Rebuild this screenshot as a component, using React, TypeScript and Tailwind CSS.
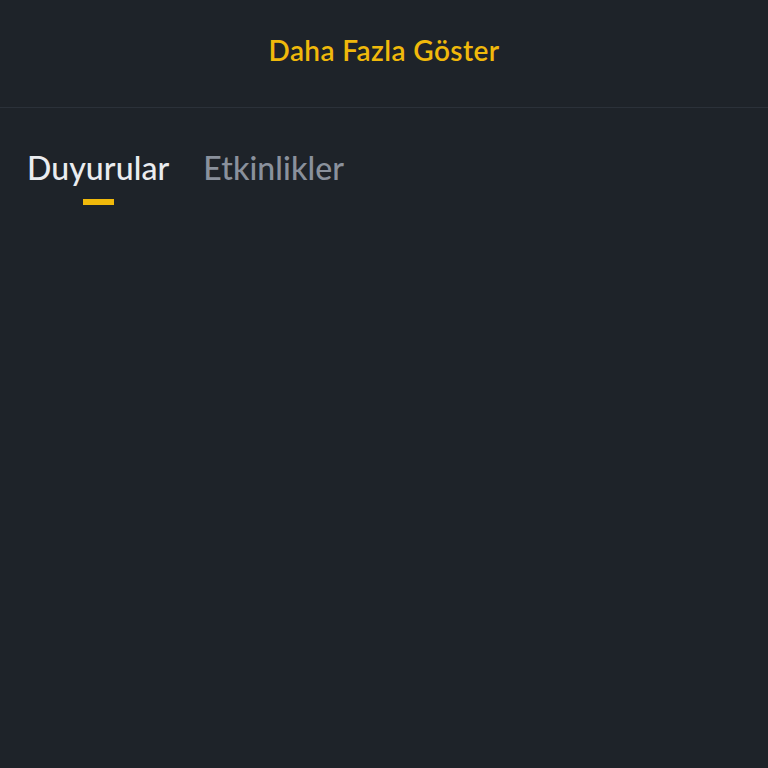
export default function App() {
  return (
    <div className="min-h-screen w-full bg-[#1e2329] font-['Lato','Liberation_Sans',sans-serif]">
      {/* --- Show more */}
      <div className="flex h-[108px] items-center justify-center border-b border-[#2b3139] pb-[8px]">
        <button className="text-[28px] font-semibold tracking-[0.4px] text-[#f0b90b]">Daha Fazla Göster</button>
      </div>

      {/* --- Tabs */}
      <div className="flex gap-[34px] px-[27px] pt-[40px]">
        <div className="flex flex-col items-center">
          <span className="text-[32px] font-medium leading-[40px] tracking-[0.1px] text-[#eaecef]">Duyurular</span>
          <span className="mt-[11px] h-[6px] w-[31px] bg-[#f0b90b]" />
        </div>
        <div className="flex flex-col items-center">
          <span className="text-[32px] font-medium leading-[40px] tracking-[0.1px] text-[#8a919c]">Etkinlikler</span>
        </div>
      </div>
    </div>
  );
}
